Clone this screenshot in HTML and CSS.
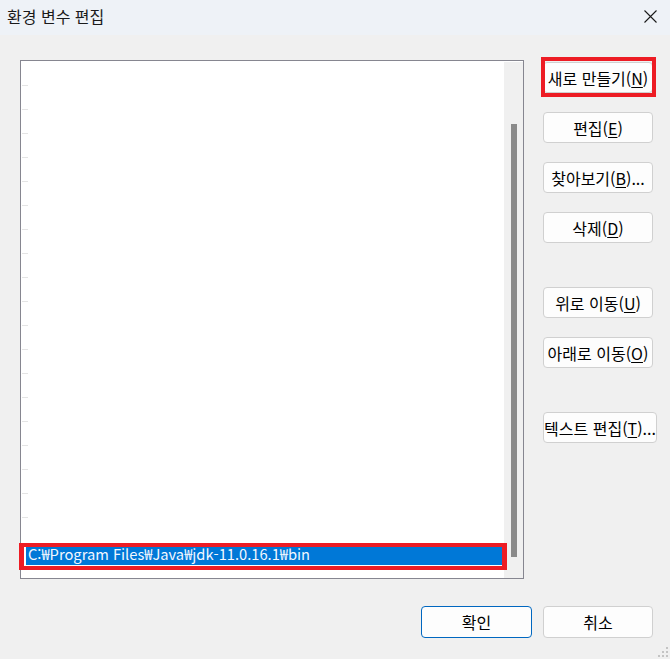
FILE: index.html
```html
<!DOCTYPE html>
<html lang="ko">
<head>
<meta charset="utf-8">
<title>환경 변수 편집</title>
<link rel="stylesheet" href="styles.css">
</head>
<body>
<div class="window">
  <div class="titlebar">
    <span class="title">환경 변수 편집</span>
    <svg class="close" width="13" height="13" viewBox="0 0 13 13"><path d="M0.5 0.5L12.5 12.5M12.5 0.5L0.5 12.5" stroke="#1a1a1a" stroke-width="1.1" fill="none"/></svg>
  </div>
  <div class="content">
    <div class="list">
      <div class="items">
        <div class="row first"></div>
        <div class="row"></div><div class="row"></div><div class="row"></div><div class="row"></div>
        <div class="row"></div><div class="row"></div><div class="row"></div><div class="row"></div>
        <div class="row"></div><div class="row"></div><div class="row"></div><div class="row"></div>
        <div class="row"></div><div class="row"></div><div class="row"></div><div class="row"></div>
        <div class="row"></div><div class="row"></div><div class="row"></div>
        <div class="row selrow"><div class="sel">C:₩Program Files₩Java₩jdk-11.0.16.1₩bin</div></div>
      </div>
      <div class="scroll"><div class="thumb"></div></div>
    </div>
    <div class="buttons">
      <button class="btn">새로 만들기(<u>N</u>)</button>
      <button class="btn">편집(<u>E</u>)</button>
      <button class="btn">찾아보기(<u>B</u>)...</button>
      <button class="btn">삭제(<u>D</u>)</button>
      <button class="btn gap">위로 이동(<u>U</u>)</button>
      <button class="btn">아래로 이동(<u>O</u>)</button>
      <button class="btn gap wide">텍스트 편집(<u>T</u>)...</button>
    </div>
  </div>
  <div class="footer">
    <button class="btn default">확인</button>
    <button class="btn">취소</button>
  </div>
  <div class="mark mark-new"></div>
  <div class="mark mark-item"></div>
  <svg class="grip" width="12" height="12" viewBox="0 0 12 12">
    <rect x="8" y="0" width="2" height="2" fill="#c4c4c4"/>
    <rect x="4" y="4" width="2" height="2" fill="#c4c4c4"/>
    <rect x="8" y="4" width="2" height="2" fill="#c4c4c4"/>
    <rect x="0" y="8" width="2" height="2" fill="#c4c4c4"/>
    <rect x="4" y="8" width="2" height="2" fill="#c4c4c4"/>
    <rect x="8" y="8" width="2" height="2" fill="#c4c4c4"/>
  </svg>
</div>
</body>
</html>
```
FILE: styles.css
```css
html, body {
  margin: 0;
  padding: 0;
}
body {
  background: #f0f0f0;
  font-family: "Malgun Gothic", "Noto Sans CJK KR", "Noto Sans", sans-serif;
  color: #000;
}
.window {
  position: relative;
  width: 670px;
  height: 659px;
  overflow: hidden;
}
.titlebar {
  height: 35px;
  background: #eef2f7;
  display: flex;
  align-items: center;
  justify-content: space-between;
  padding: 0 13px 0 7px;
  box-sizing: border-box;
}
.title {
  font-size: 16px;
  line-height: 20px;
  color: #1a1a1a;
  margin-top: -3px;
}
.close {
  display: block;
  margin-top: -3px;
}
.content {
  display: flex;
  padding: 25px 0 0 20px;
}
.list {
  width: 504px;
  height: 519px;
  box-sizing: border-box;
  border: 1px solid #868690;
  background: #fff;
  display: flex;
}
.items {
  flex: 1;
  display: flex;
  flex-direction: column;
}
.row {
  position: relative;
  height: 24px;
  flex: none;
}
.row::before {
  content: "";
  position: absolute;
  left: 1px;
  top: 0;
  width: 6px;
  height: 1px;
  background: #e4e4e4;
}
.row.first::before {
  display: none;
}
.selrow {
  padding: 2px 1px 0 4px;
  box-sizing: border-box;
}
.selrow::before {
  display: none;
}
.sel {
  height: 22px;
  box-sizing: border-box;
  background: #0078d7;
  border-left: 1px solid #fff;
  border-top: 1px dotted #e8a857;
  border-right: 1px dotted #e8a857;
  color: #f2f7ff;
  font-size: 14.7px;
  line-height: 20px;
  padding-left: 2px;
  white-space: nowrap;
  overflow: hidden;
}
.scroll {
  width: 19px;
  margin-top: 1px;
  background: #f0f0f0;
  display: flex;
  flex-direction: column;
  align-items: center;
}
.thumb {
  width: 6px;
  height: 433px;
  margin-top: 62px;
  background: #8a8a8a;
}
.buttons {
  display: flex;
  flex-direction: column;
  align-items: flex-start;
  margin-left: 19px;
  padding-top: 2px;
  gap: 19px;
}
.btn {
  width: 110px;
  height: 31px;
  box-sizing: border-box;
  background: #fdfdfd;
  border: 1px solid #d0d0d0;
  border-radius: 4px;
  font-family: "Malgun Gothic", "Noto Sans CJK KR", "Noto Sans", sans-serif;
  font-size: 16px;
  line-height: 20px;
  color: #000;
  padding: 0;
  white-space: nowrap;
  display: flex;
  align-items: center;
  justify-content: center;
}
.btn u {
  text-decoration-thickness: 1px;
  text-underline-offset: 2px;
}
.btn.gap {
  margin-top: 25px;
}
.btn.wide {
  width: 114px;
}
.footer {
  display: flex;
  justify-content: flex-end;
  gap: 11px;
  padding: 27px 17px 0 0;
}
.footer .btn {
  height: 32px;
  width: 110px;
}
.footer .btn.default {
  width: 111px;
  border-color: #0067c0;
}
.mark {
  position: absolute;
  border: 4px solid #ed1c24;
  box-sizing: border-box;
}
.mark-new {
  left: 541px;
  top: 57px;
  width: 115px;
  height: 40px;
}
.mark-item {
  left: 19px;
  top: 543px;
  width: 488px;
  height: 27px;
  border-width: 4px 5px 4px 5px;
}
.grip {
  position: absolute;
  right: 0;
  bottom: 0;
}
```
